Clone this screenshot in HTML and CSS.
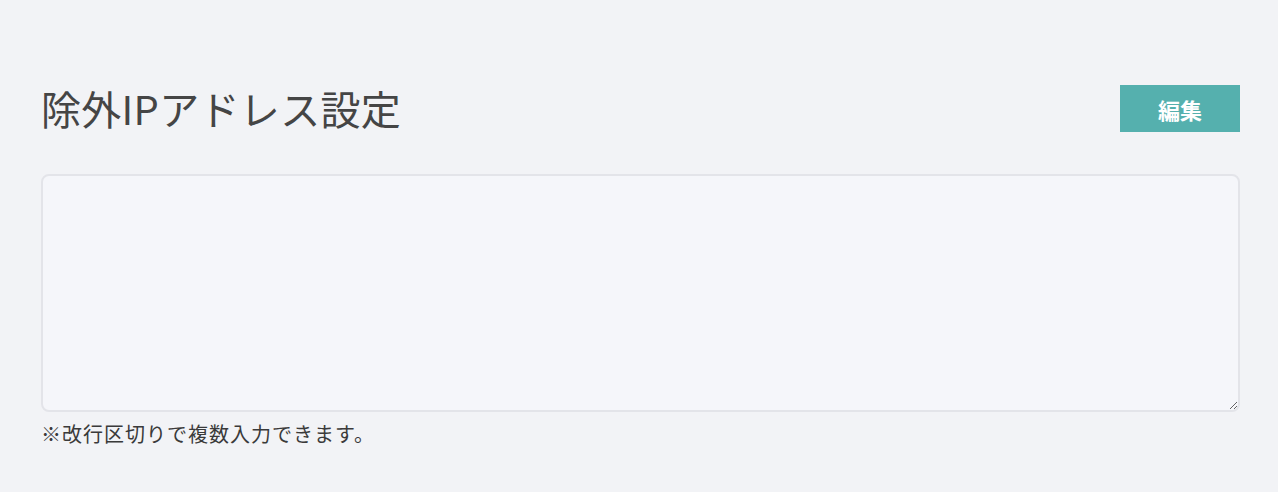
FILE: index.html
```html
<!DOCTYPE html>
<html lang="ja">
<head>
<meta charset="utf-8">
<link rel="stylesheet" href="styles.css">
</head>
<body>
<main class="page">
  <div class="header">
    <h1 class="title">除外IPアドレス設定</h1>
    <button class="edit-btn">編集</button>
  </div>
  <textarea class="ip-input"></textarea>
  <p class="note">※改行区切りで複数入力できます。</p>
</main>
</body>
</html>
```
FILE: styles.css
```css
html, body {
  margin: 0;
  padding: 0;
  background: #f2f3f6;
}
body {
  font-family: "Noto Sans CJK JP", "Noto Sans", sans-serif;
  color: #444;
}
.page {
  padding: 85px 38px 0 41px;
}
.header {
  display: flex;
  align-items: center;
  justify-content: space-between;
  height: 47px;
}
.title {
  margin: 0;
  font-size: 40px;
  font-weight: 400;
  color: #454545;
  line-height: 47px;
  letter-spacing: 0.3px;
}
.edit-btn {
  width: 120px;
  height: 47px;
  border: 0;
  border-radius: 0;
  background: #55b0ae;
  color: #fff;
  font-family: inherit;
  font-size: 22px;
  font-weight: 700;
  padding: 0;
  cursor: pointer;
}
.ip-input {
  display: block;
  box-sizing: border-box;
  width: 100%;
  height: 238px;
  margin-top: 42px;
  border: 2px solid #e3e4e9;
  border-radius: 8px;
  background: #f5f6fa;
  resize: vertical;
  font-family: inherit;
  font-size: 16px;
  padding: 10px;
  outline: none;
}
.note {
  margin: 8px 0 0;
  font-size: 20px;
  font-weight: 400;
  letter-spacing: 1px;
  line-height: 28px;
  color: #3a3a3a;
}
```
